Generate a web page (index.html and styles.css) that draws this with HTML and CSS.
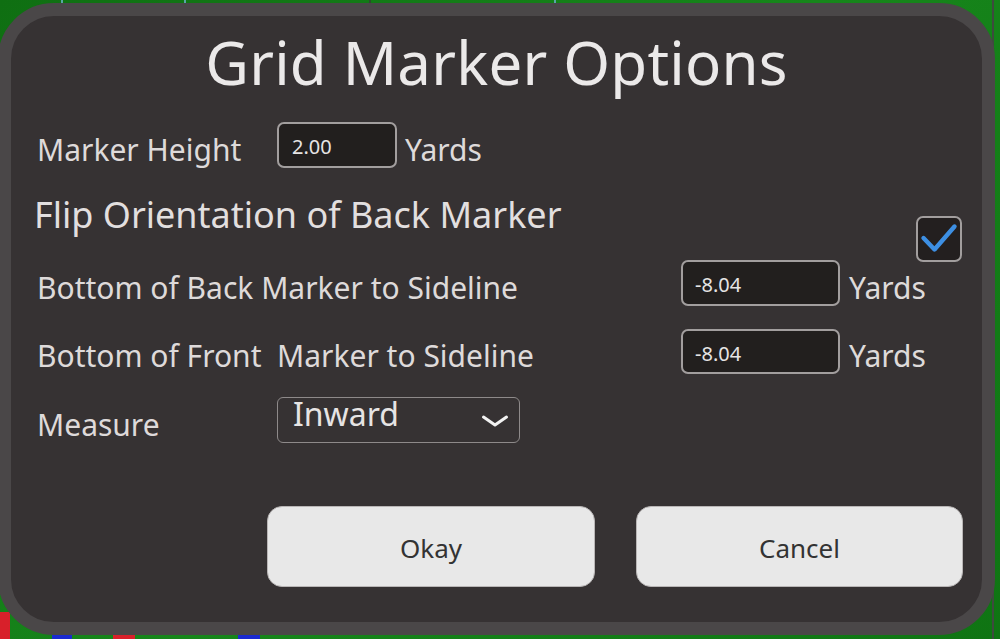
FILE: index.html
```html
<!DOCTYPE html>
<html lang="en">
<head>
<meta charset="utf-8">
<title>Grid Marker Options</title>
<link rel="stylesheet" href="styles.css">
</head>
<body>
<div class="dialog">
  <h1 class="title">Grid Marker Options</h1>
  <div class="content">
    <div class="row row-height">
      <span class="lbl lbl-short">Marker Height</span>
      <div class="field field-small"><span class="val">2.00</span></div>
      <span class="unit unit-near">Yards</span>
    </div>
    <div class="row row-flip">
      <span class="flip">Flip Orientation of Back Marker</span>
      <div class="check">
        <svg viewBox="0 0 42 42" width="42" height="42" aria-hidden="true">
          <path d="M5.5 20 L16.5 31.5 L36.5 8.5" fill="none" stroke="#3d8fe3" stroke-width="4.4" stroke-linecap="round" stroke-linejoin="round"/>
        </svg>
      </div>
    </div>
    <div class="row row-back">
      <span class="lbl lbl-long">Bottom of Back Marker to Sideline</span>
      <div class="field field-wide"><span class="val">-8.04</span></div>
      <span class="unit unit-far">Yards</span>
    </div>
    <div class="row row-front">
      <span class="lbl lbl-long">Bottom of Front&nbsp; Marker to Sideline</span>
      <div class="field field-wide"><span class="val">-8.04</span></div>
      <span class="unit unit-far">Yards</span>
    </div>
    <div class="row row-measure">
      <span class="lbl lbl-short">Measure</span>
      <div class="select">
        <span class="select-text">Inward</span>
        <svg class="chev" viewBox="0 0 28 14" width="28" height="14" aria-hidden="true">
          <path d="M2.5 3 L14 11 L25.5 3" fill="none" stroke="#f2f2f2" stroke-width="3" stroke-linecap="round" stroke-linejoin="round"/>
        </svg>
      </div>
    </div>
    <div class="buttons">
      <button class="btn btn-okay">Okay</button>
      <button class="btn btn-cancel">Cancel</button>
    </div>
  </div>
</div>
</body>
</html>
```

FILE: styles.css
```css
html, body {
  margin: 0;
  padding: 0;
}

body {
  width: 1000px;
  height: 639px;
  overflow: hidden;
  font-family: "Noto Sans", "Open Sans", sans-serif;
  background-color: #137a17;
  background-image:
    linear-gradient(to right, transparent 61px, #5aa4a8 61px, #5aa4a8 63px, transparent 63px),
    linear-gradient(to right, transparent 184px, #5aa4a8 184px, #5aa4a8 186px, transparent 186px),
    linear-gradient(to right, transparent 369px, #2c4a2c 369px, #2c4a2c 371px, transparent 371px),
    linear-gradient(to right, transparent 554px, #5aa4a8 554px, #5aa4a8 556px, transparent 556px),
    linear-gradient(to right, transparent 992px, #3e4a3e 992px, #3e4a3e 994px, transparent 994px),
    linear-gradient(to bottom, transparent 612px, #d8202a 612px),
    linear-gradient(to right, transparent 52px, #1a2ad0 52px, #1a2ad0 72px, transparent 72px, transparent 113px, #d8202a 113px, #d8202a 135px, transparent 135px, transparent 238px, #1a2ad0 238px, #1a2ad0 260px, transparent 260px),
    linear-gradient(135deg, #0f6f12 0%, #17861b 50%, #0f7413 100%);
  background-size: 1000px 6px, 1000px 6px, 1000px 6px, 1000px 6px, 1000px 639px, 10px 639px, 1000px 4px, 1000px 639px;
  background-position: 0 0, 0 0, 0 0, 0 0, 0 0, 0 0, 0 635px, 0 0;
  background-repeat: no-repeat;
}

.dialog {
  box-sizing: border-box;
  width: 997px;
  height: 632px;
  margin: 3px 0 0 -2px;
  border: 13px solid #4a4748;
  border-radius: 56px;
  background: #363233;
  color: #dedada;
}

.title {
  margin: 0;
  padding-top: 16px;
  font-size: 60px;
  line-height: 60px;
  font-weight: 400;
  text-align: center;
  color: #ebe9e9;
  letter-spacing: 0.2px;
}

.content {
  padding-left: 26px;
  padding-top: 30px;
}

.row {
  display: flex;
  align-items: center;
  height: 46px;
}

.lbl,
.unit {
  font-size: 30px;
  line-height: 30px;
  padding-top: 9px;
  white-space: pre;
}

.lbl-short { width: 240px; flex: none; }
.lbl-long { width: 644px; flex: none; }

.unit-near { margin-left: 8px; }
.unit-far { margin-left: 9px; }

.field {
  box-sizing: border-box;
  height: 46px;
  border: 2px solid #a29e9e;
  border-radius: 7px;
  background: #221f1e;
  display: flex;
  align-items: center;
  flex: none;
}

.field-small { width: 120px; padding-left: 13px; }
.field-wide { width: 159px; height: 46px; padding-left: 12px; }

.val {
  font-size: 20px;
  line-height: 20px;
  padding-top: 4px;
  color: #e6e4e4;
}

.row-flip {
  height: 94px;
  align-items: flex-start;
}

.flip {
  font-size: 36px;
  line-height: 44px;
  margin-top: 25px;
  margin-left: -3px;
  color: #e2dfdf;
}

.check {
  box-sizing: border-box;
  width: 46px;
  height: 46px;
  margin-left: auto;
  margin-right: 20px;
  align-self: flex-end;
  border: 2px solid #a29e9e;
  border-radius: 7px;
  background: #231f1f;
  display: flex;
  align-items: center;
  justify-content: center;
}

.row-back { margin-top: -2px; }
.row-front { margin-top: 23px; height: 45px; }
.row-front .field { height: 45px; }
.row-measure { margin-top: 23px; }

.select {
  box-sizing: border-box;
  width: 243px;
  height: 46px;
  border: 1.5px solid #8e8a8a;
  border-radius: 6px;
  display: flex;
  align-items: flex-start;
  justify-content: space-between;
  padding: 0 10px 0 15px;
  flex: none;
}

.select-text {
  font-size: 32px;
  line-height: 32px;
  color: #e6e4e4;
}

.chev {
  margin-top: 16px;
}

.buttons {
  display: flex;
  gap: 41px;
  margin-top: 63px;
  margin-left: 230px;
}

.btn {
  box-sizing: border-box;
  width: 328px;
  height: 81px;
  border: 1px solid #b9b6b6;
  border-radius: 15px;
  background: #e8e8e8;
  color: #333;
  font-family: "Noto Sans", "Open Sans", sans-serif;
  font-size: 26px;
  line-height: 26px;
  padding: 2px 0 0 0;
}

.btn-cancel { width: 327px; }
```
